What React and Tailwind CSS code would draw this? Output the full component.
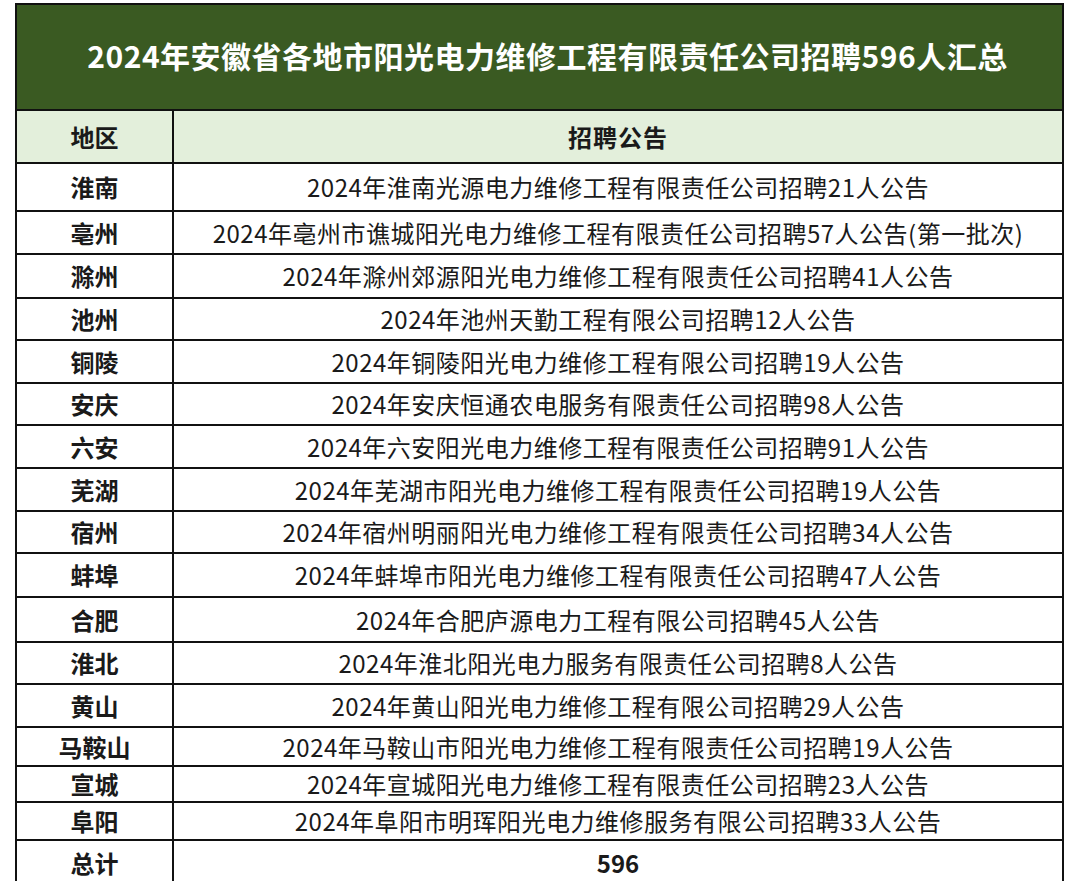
export default function App() {
  const rows = [
    ["淮南", "2024年淮南光源电力维修工程有限责任公司招聘21人公告", "h-[48px]"],
    ["亳州", "2024年亳州市谯城阳光电力维修工程有限责任公司招聘57人公告(第一批次)", "h-[43px]"],
    ["滁州", "2024年滁州郊源阳光电力维修工程有限责任公司招聘41人公告", "h-[44px]"],
    ["池州", "2024年池州天勤工程有限公司招聘12人公告", "h-[42px]"],
    ["铜陵", "2024年铜陵阳光电力维修工程有限公司招聘19人公告", "h-[43px]"],
    ["安庆", "2024年安庆恒通农电服务有限责任公司招聘98人公告", "h-[42px]"],
    ["六安", "2024年六安阳光电力维修工程有限责任公司招聘91人公告", "h-[43px]"],
    ["芜湖", "2024年芜湖市阳光电力维修工程有限责任公司招聘19人公告", "h-[43px]"],
    ["宿州", "2024年宿州明丽阳光电力维修工程有限责任公司招聘34人公告", "h-[42px]"],
    ["蚌埠", "2024年蚌埠市阳光电力维修工程有限责任公司招聘47人公告", "h-[44px]"],
    ["合肥", "2024年合肥庐源电力工程有限公司招聘45人公告", "h-[45px]"],
    ["淮北", "2024年淮北阳光电力服务有限责任公司招聘8人公告", "h-[42px]"],
    ["黄山", "2024年黄山阳光电力维修工程有限公司招聘29人公告", "h-[43px]"],
    ["马鞍山", "2024年马鞍山市阳光电力维修工程有限责任公司招聘19人公告", "h-[39px]"],
    ["宣城", "2024年宣城阳光电力维修工程有限责任公司招聘23人公告", "h-[36px]"],
    ["阜阳", "2024年阜阳市明珲阳光电力维修服务有限公司招聘33人公告", "h-[38px]"],
  ];
  return (
    <div className="min-h-[881px] w-[1080px] bg-white pt-[3px] pl-[15px] font-['Noto_Sans_CJK_SC','Noto_Sans',sans-serif] text-[#1a1a1a]">
      <div className="w-[1049px] border-2 border-[#111]">
        <div className="flex h-[106px] items-center justify-center border-b-2 border-[#111] bg-[#3a5a22] pb-[3px] pl-[16px] text-[30px] font-bold tracking-[0.5px] text-white">
          2024年安徽省各地市阳光电力维修工程有限责任公司招聘596人汇总
        </div>
        <div className="flex h-[53px] border-b-2 border-[#111] bg-[#e3efdb] text-[24px] font-bold">
          <div className="flex w-[157px] items-center justify-center border-r-2 border-[#111]">地区</div>
          <div className="flex flex-1 items-center justify-center tracking-[1px]">招聘公告</div>
        </div>
        {rows.map(([region, text, h]) => (
          <div key={region} className={`flex border-b-2 border-[#111] ${h}`}>
            <div className="flex w-[157px] items-center justify-center border-r-2 border-[#111] text-[24px] font-bold">
              {region}
            </div>
            <div className="flex flex-1 items-center justify-center text-[24px] tracking-[0.5px]">{text}</div>
          </div>
        ))}
        <div className="flex h-[44px]">
          <div className="flex w-[157px] items-center justify-center border-r-2 border-[#111] text-[24px] font-bold">
            总计
          </div>
          <div className="flex flex-1 items-center justify-center text-[24px] font-bold">596</div>
        </div>
      </div>
    </div>
  );
}
